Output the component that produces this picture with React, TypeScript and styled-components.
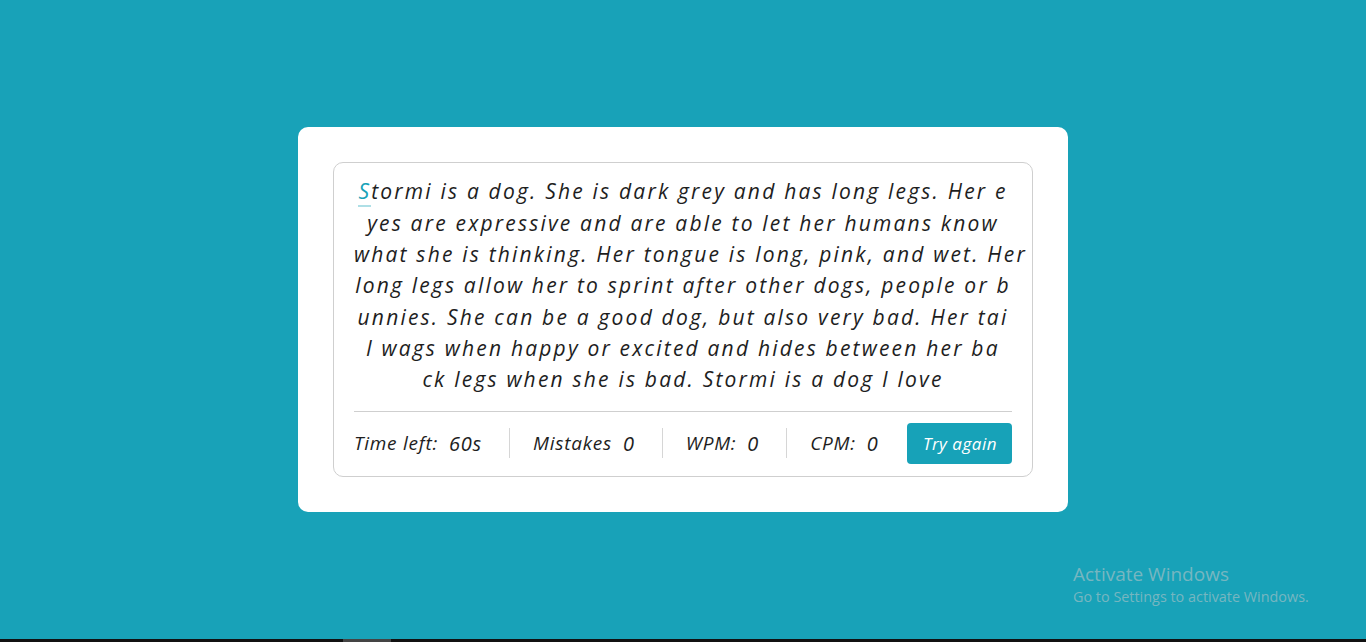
import React from "react";
import styled, { createGlobalStyle } from "styled-components";

const GlobalStyle = createGlobalStyle`
  html, body { margin: 0; padding: 0; }
  body {
    background: #17a2b8;
    font-family: "Open Sans", "Liberation Sans", sans-serif;
    overflow: hidden;
  }
`;

const Page = styled.div`
  position: relative;
  display: flex;
  flex-direction: column;
  height: 642px;
  background: #18a2b8;
`;

const Main = styled.main`
  flex: 1;
  display: flex;
  align-items: center;
  justify-content: center;
`;

const Card = styled.div`
  width: 770px;
  box-sizing: border-box;
  padding: 35px;
  background: #fff;
  border-radius: 10px;
`;

const Box = styled.div`
  border: 1px solid #cfcfcf;
  border-radius: 10px;
  padding: 13px 20px 12px;
`;

const Paragraph = styled.p`
  margin: 0;
  font-family: "Open Sans", sans-serif;
  font-style: italic;
  font-size: 21px;
  line-height: 31.3px;
  letter-spacing: 2.2px;
  color: #1e1e1e;
  text-align: center;
`;

const Line = styled.span`
  display: block;
  white-space: nowrap;
`;

const Char = styled.span<{ $active?: boolean }>`
  color: ${(p) => (p.$active ? "#17a2b8" : "inherit")};
  border-bottom: ${(p) => (p.$active ? "2px solid rgba(23, 162, 184, 0.35)" : "none")};
`;

const Divider = styled.hr`
  margin: 15px 0 0;
  border: none;
  border-top: 1px solid #cfcfcf;
`;

const Stats = styled.div`
  display: flex;
  align-items: center;
  padding-top: 11px;
`;

const Stat = styled.div<{ $last?: boolean }>`
  display: flex;
  align-items: center;
  gap: 11px;
  height: 30px;
  font-style: italic;
  font-size: 19px;
  letter-spacing: 0.75px;
  color: #1e1e1e;
  padding-right: ${(p) => (p.$last ? "0" : "27px")};
  margin-right: ${(p) => (p.$last ? "0" : "23px")};
  border-right: ${(p) => (p.$last ? "none" : "1px solid #d6d6d6")};
`;

const Value = styled.span`
  font-size: 20px;
  letter-spacing: 0.8px;
`;

const Button = styled.button`
  margin-left: auto;
  height: 41px;
  padding: 0 15px 0 16px;
  border: none;
  border-radius: 4px;
  background: #17a2b8;
  color: #fff;
  font-family: "Open Sans", sans-serif;
  font-style: italic;
  font-size: 17px;
  letter-spacing: 0.5px;
  cursor: pointer;
`;

const Taskbar = styled.div`
  height: 3px;
  background: #111;
  display: flex;
`;

const TaskItem = styled.div`
  margin-left: 343px;
  width: 48px;
  background: #444;
`;

const Watermark = styled.div`
  position: absolute;
  left: 1073px;
  top: 562px;
  color: rgba(200, 200, 200, 0.55);
  font-family: "Open Sans", sans-serif;
`;

const WatermarkTitle = styled.div`
  font-size: 19px;
  line-height: 25px;
`;

const WatermarkSub = styled.div`
  font-size: 14.4px;
  line-height: 20px;
`;

const LINES = [
  "Stormi is a dog. She is dark grey and has long legs. Her e",
  "yes are expressive and are able to let her humans know",
  "what she is thinking. Her tongue is long, pink, and wet. Her",
  "long legs allow her to sprint after other dogs, people or b",
  "unnies. She can be a good dog, but also very bad. Her tai",
  "l wags when happy or excited and hides between her ba",
  "ck legs when she is bad. Stormi is a dog I love",
];

const STATS = [
  { label: "Time left:", value: "60s" },
  { label: "Mistakes", value: "0" },
  { label: "WPM:", value: "0" },
  { label: "CPM:", value: "0" },
];

export default function App() {
  return (
    <>
      <GlobalStyle />
      <Page>
        <Main>
          <Card>
            <Box>
              <Paragraph>
                {LINES.map((line, i) =>
                  i === 0 ? (
                    <Line key={i}>
                      <Char $active>{line[0]}</Char>
                      {line.slice(1)}
                    </Line>
                  ) : (
                    <Line key={i}>{line}</Line>
                  )
                )}
              </Paragraph>
              <Divider />
              <Stats>
                {STATS.map((s, i) => (
                  <Stat key={s.label} $last={i === STATS.length - 1}>
                    <span>{s.label}</span>
                    <Value>{s.value}</Value>
                  </Stat>
                ))}
                <Button>Try again</Button>
              </Stats>
            </Box>
          </Card>
        </Main>
        <Taskbar>
          <TaskItem />
        </Taskbar>
        <Watermark>
          <WatermarkTitle>Activate Windows</WatermarkTitle>
          <WatermarkSub>Go to Settings to activate Windows.</WatermarkSub>
        </Watermark>
      </Page>
    </>
  );
}
